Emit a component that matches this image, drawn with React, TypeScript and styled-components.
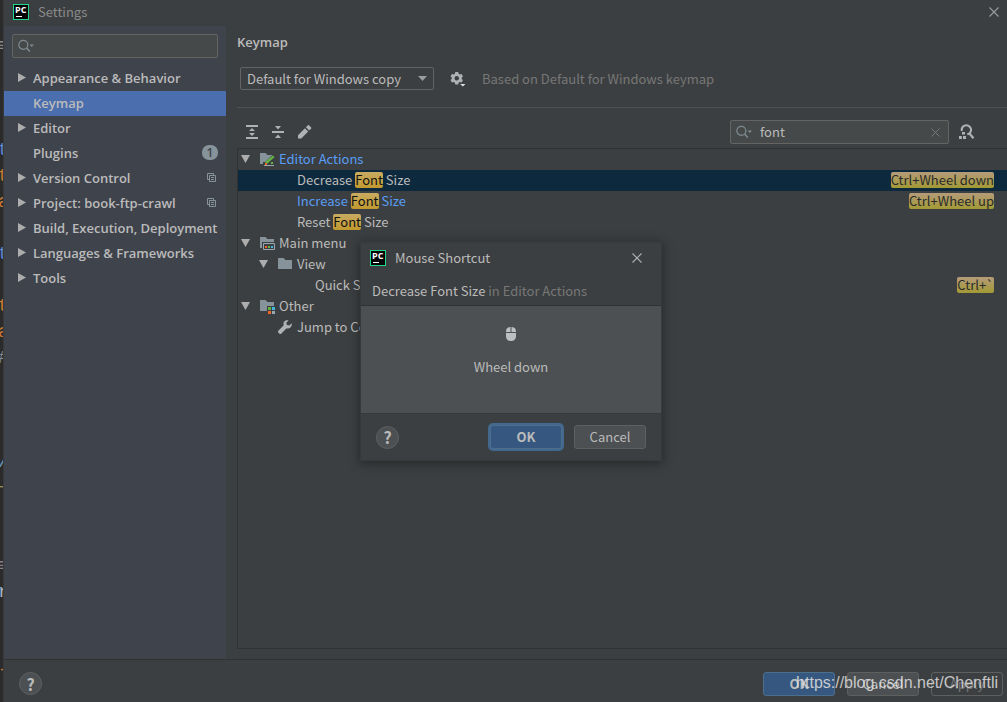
import React, { useState } from 'react';
import styled, { createGlobalStyle, css } from 'styled-components';

const colors = {
  window: '#3c3f41',
  sidebar: '#3f434c',
  editor: '#2b2b2b',
  field: '#45494a',
  fieldBorder: '#646464',
  line: '#323232',
  divider: '#515151',
  text: '#bbbbbb',
  muted: '#777777',
  link: '#589df6',
  selected: '#4b6eaf',
  rowSelected: '#0d293e',
  icon: '#afb1b3',
  folder: '#87939a',
};

const boldFont = css`
  font-family: "Open Sans", "Noto Sans", sans-serif;
  font-weight: 600;
`;

const GlobalStyle = createGlobalStyle`
  * { box-sizing: border-box; }
  body {
    margin: 0;
    background: ${colors.window};
    color: ${colors.text};
    font: 13px/20px "Noto Sans CJK SC", "Noto Sans", sans-serif;
  }
  button, input, select { font: inherit; color: inherit; }
  ul { list-style: none; margin: 0; padding: 0; }
  h1, h2, p { margin: 0; }
  svg { display: block; flex: none; }
`;

const Screen = styled.div`
  position: relative;
  display: grid;
  grid-template-columns: 4px minmax(0, 1fr);
  min-height: 100vh;
`;

const EditorStrip = styled.div`
  height: 0;
  min-height: 100%;
  overflow: hidden;
  padding-top: 33px;
  background: ${colors.editor};
  border-right: 1px solid #37393b;
  font: 18px/26px "Liberation Mono", monospace;
  text-indent: -2px;
`;

const CodeLine = styled.div<{ $color?: string }>`
  height: 26px;
  color: ${p => p.$color};
`;

const Window = styled.div`
  display: flex;
  flex-direction: column;
  min-width: 0;
`;

const TitleBar = styled.header`
  display: flex;
  align-items: center;
  gap: 9px;
  height: 26px;
  padding: 0 8px 2px 9px;
  color: #8a8a8a;
`;

const Title = styled.h1`
  flex: 1;
  font-size: 13px;
  font-weight: 400;
`;

const IconButton = styled.button`
  display: grid;
  place-items: center;
  padding: 0;
  border: 0;
  background: none;
  color: ${colors.icon};
`;

const Body = styled.div`
  display: grid;
  grid-template-columns: 222px minmax(0, 1fr);
  flex: 1;
`;

const Sidebar = styled.nav`
  background: ${colors.sidebar};
  padding-top: 8px;
`;

const SearchBox = styled.label<{ $width?: string; $margin?: string }>`
  display: flex;
  align-items: center;
  gap: 8px;
  height: 24px;
  width: ${p => p.$width || 'auto'};
  margin: ${p => p.$margin || '0'};
  padding: 0 8px 0 5px;
  background: ${colors.field};
  border: 1px solid ${colors.fieldBorder};
  border-radius: 2px;
`;

const SearchInput = styled.input`
  flex: 1;
  min-width: 0;
  padding: 0;
  border: 0;
  outline: 0;
  background: none;
`;

const NavLink = styled.a<{ $active?: boolean }>`
  display: flex;
  align-items: center;
  gap: 7px;
  height: 25px;
  padding: 0 8px 2px 14px;
  color: ${colors.text};
  ${boldFont}
  text-decoration: none;
  white-space: nowrap;
  ${p => p.$active && css`background: ${colors.selected};`}
`;

const NavLabel = styled.span`
  flex: 1;
`;

const CountBadge = styled.span`
  width: 16px;
  height: 15px;
  border-radius: 7px;
  background: #87939a;
  color: #3f434c;
  font-size: 12px;
  font-weight: 600;
  line-height: 15px;
  text-align: center;
`;

const ShareSlot = styled.span`
  padding-right: 2px;
`;

const Main = styled.main`
  display: flex;
  flex-direction: column;
  min-width: 0;
  padding: 6px 0 10px 11px;
`;

const PageTitle = styled.h2`
  font-size: 13px;
  line-height: 20px;
  ${boldFont}
`;

const SchemeRow = styled.div`
  display: flex;
  align-items: center;
  margin: 15px 0 17px 3px;
`;

const SelectBox = styled.div`
  display: flex;
  align-items: center;
  width: 194px;
  height: 23px;
  padding: 0 6px;
  border: 1px solid ${colors.fieldBorder};
  border-radius: 2px;
`;

const Select = styled.select`
  appearance: none;
  flex: 1;
  min-width: 0;
  height: 20px;
  padding: 0;
  border: 0;
  outline: 0;
  background: none;
`;

const GearButton = styled(IconButton)`
  margin: 0 16px;
`;

const Note = styled.span`
  color: ${colors.muted};
`;

const Divider = styled.hr`
  width: 100%;
  margin: 0 0 12px;
  border: 0;
  border-top: 1px solid ${colors.divider};
`;

const Toolbar = styled.div`
  display: flex;
  align-items: center;
  gap: 10px;
  padding: 0 32px 0 7px;
  margin-bottom: 4px;
`;

const Spacer = styled.span`
  flex: 1;
`;

const TreePanel = styled.div`
  flex: 1;
  border: solid ${colors.line};
  border-width: 1px 0 1px 1px;
`;

const TreeRow = styled.li<{ $depth: number; $selected?: boolean; $link?: boolean }>`
  display: flex;
  align-items: center;
  height: 21px;
  padding: 0 13px 2px ${p => 3 + p.$depth * 18}px;
  white-space: nowrap;
  color: ${p => (p.$link ? colors.link : colors.text)};
  ${p => p.$selected && css`background: ${colors.rowSelected};`}
`;

const Twisty = styled.span<{ $leaf?: boolean }>`
  width: ${p => (p.$leaf ? 20 : 18)}px;
  flex: none;
`;

const TreeIcon = styled.span`
  width: 20px;
  flex: none;
`;

const TreeLabel = styled.span`
  flex: 1;
`;

const Match = styled.mark`
  border-radius: 2px;
  background: linear-gradient(#c8ab62, #c1992f);
  color: #111;
  line-height: 16px;
  display: inline-block;
`;

const Shortcut = styled.kbd`
  border-radius: 2px;
  background: linear-gradient(#b59b7a, #a29a34);
  color: #2b2b2b;
  font: inherit;
  line-height: 16px;
`;

const Footer = styled.footer`
  display: flex;
  align-items: center;
  gap: 12px;
  height: 43px;
  padding: 5px 4px 0 15px;
  border-top: 1px solid ${colors.line};
`;

const HelpButton = styled.button`
  width: 23px;
  height: 23px;
  padding: 0;
  border: 1px solid #5e6162;
  border-radius: 50%;
  background: #4c5052;
  font-size: 16px;
  font-weight: 700;
  line-height: 20px;
  text-align: center;
`;

const Button = styled.button<{ $primary?: boolean; $focused?: boolean }>`
  width: 72px;
  height: 24px;
  padding: 0;
  border: 1px solid #5e6060;
  border-radius: 3px;
  background: #4c5052;
  line-height: 20px;
  ${p => p.$primary && css`
    background: #365880;
    border-color: #4c708c;
    font-weight: 700;
  `}
  ${p => p.$focused && css`box-shadow: 0 0 0 2px #43688f;`}
  &:disabled {
    background: none;
    color: ${colors.muted};
  }
`;

const Watermark = styled.div`
  position: absolute;
  right: 9px;
  bottom: 9px;
  color: rgba(225, 225, 225, 0.85);
  font: 16px/20px "Liberation Sans", sans-serif;
  pointer-events: none;
`;

const Dialog = styled.section`
  position: absolute;
  top: 242px;
  left: 361px;
  width: 300px;
  border-top: 1px solid #37393b;
  background: ${colors.window};
  box-shadow: 0 0 0 1px #37393b, 0 2px 10px 2px rgba(0, 0, 0, 0.35);
`;

const DialogTitle = styled.header`
  display: flex;
  align-items: center;
  gap: 9px;
  height: 29px;
  padding: 0 19px 0 9px;
`;

const DialogSubject = styled.p`
  padding: 9px 11px 4px;
  border-bottom: 1px solid ${colors.line};
`;

const DialogBody = styled.div`
  display: flex;
  flex-direction: column;
  align-items: center;
  gap: 16px;
  height: 107px;
  padding-top: 21px;
  background: #4c5052;
`;

const DialogFooter = styled.div`
  display: flex;
  align-items: center;
  gap: 12px;
  height: 47px;
  padding: 0 15px;
  border-top: 1px solid #37393b;
`;

const LogoText = styled.text`
  font: 700 9px "Open Sans", sans-serif;
  fill: #ffffff;
`;

const Logo = () => (
  <svg width="16" height="16" viewBox="0 0 16 16" aria-hidden="true">
    <rect x="0.5" y="0.5" width="15" height="15" fill="#050505" stroke="#21d789" />
    <LogoText x="2" y="9">PC</LogoText>
    <rect x="3" y="12" width="6" height="1" fill="#fff" />
  </svg>
);

const Cross = ({ size = 10, color = '#9a9c9d' }) => (
  <svg width={size} height={size} viewBox="0 0 10 10" aria-hidden="true">
    <path d="M.5.5l9 9M9.5.5l-9 9" stroke={color} strokeWidth="1.1" fill="none" />
  </svg>
);

const SearchIcon = () => (
  <svg width="16" height="14" viewBox="0 0 16 14" fill="none" aria-hidden="true">
    <circle cx="5.3" cy="5.8" r="4.5" stroke="#7f8b91" strokeWidth="1.2" />
    <path d="M8.6 9.1l3.2 3.4" stroke="#7f8b91" strokeWidth="1.5" />
    <path d="M11.5 5.5H16L13.75 8z" fill="#7f8b91" />
  </svg>
);

const RightArrow = () => (
  <svg width="8" height="9" viewBox="0 0 8 9" aria-hidden="true">
    <path d="M0 0l8 4.5L0 9z" fill="#adadad" />
  </svg>
);

const DownArrow = () => (
  <svg width="9" height="8" viewBox="0 0 9 8" aria-hidden="true">
    <path d="M0 0h9L4.5 8z" fill="#adadad" />
  </svg>
);

const ComboArrow = () => (
  <svg width="9" height="5" viewBox="0 0 9 5" aria-hidden="true">
    <path d="M0 0h9L4.5 5z" fill="#9a9da0" />
  </svg>
);

const ShareIcon = () => (
  <svg width="9" height="9" viewBox="0 0 9 9" fill="none" stroke="#87939a" aria-hidden="true">
    <path d="M2 6.5H.5v-6h6V2M2.5 2.5h6v6h-6zM4 4.5h3M4 6.5h3" />
  </svg>
);

const GearIcon = () => (
  <svg width="16" height="16" viewBox="0 0 16 16" aria-hidden="true">
    <path
      fillRule="evenodd"
      fill={colors.icon}
      d="M5.3 1h2.9l.4 1.8 1.2.7 1.8-.6 1.4 2.5L11.7 6.6v1.3l1.3 1.2-1.4 2.4-1.8-.5-1.2.7-.4 1.8H5.3l-.4-1.8-1.2-.7-1.8.5L.5 9.1l1.3-1.2V6.6L.5 5.4l1.4-2.5 1.8.6 1.2-.7zM6.75 5a2.25 2.25 0 100 4.5 2.25 2.25 0 000-4.5z"
    />
    <path d="M9.5 12.5H16L12.75 16z" fill={colors.window} />
    <path d="M10.2 13H15.5L12.85 15.6z" fill="#e0e0e0" />
  </svg>
);

const ExpandIcon = () => (
  <svg width="16" height="16" viewBox="0 0 16 16" fill={colors.icon} aria-hidden="true">
    <path d="M2 1h12v2H2zM2 13h12v2H2zM8 4l3 3H5zM8 12L5 9h6z" />
  </svg>
);

const CollapseIcon = () => (
  <svg width="16" height="16" viewBox="0 0 16 16" fill={colors.icon} aria-hidden="true">
    <path d="M2 7h12v2H2zM5 2h6L8 5.5zM5 14h6l-3-3.5z" />
  </svg>
);

const PencilIcon = () => (
  <svg width="16" height="16" viewBox="0 0 16 16" fill={colors.icon} aria-hidden="true">
    <path d="M2 11.200V14.500H5.300L12.200 7.600 8.900 4.300zM9.900 3.300L11.900 1.300a.8.8 0 011.100 0L15.200 3.500a.8.8 0 010 1.100L13.200 6.600z" />
  </svg>
);

const FindShortcutIcon = () => (
  <svg width="16" height="16" viewBox="0 0 16 16" aria-hidden="true">
    <path d="M2.9 7A4.6 4.6 0 1110.5 9.3L8.3 10.3" fill="none" stroke={colors.icon} strokeWidth="2" />
    <path d="M10 9l4.5 5.2" stroke={colors.icon} strokeWidth="2.2" />
    <path d="M3 8h3v2.5H3zM0 12h2.8v3H0zM4 12h3v3H4z" fill={colors.icon} />
  </svg>
);

const FolderIcon = ({ kind }: { kind: string }) => (
  <svg width="16" height="16" viewBox="0 0 16 16" aria-hidden="true">
    <path d="M1 2h5.5l2 2H15v9H1z" fill={colors.folder} />
    {kind === 'editor' && (
      <>
        <path d="M4 11h2l7.5-7H16v12H4z" fill={colors.window} />
        <path d="M6.5 12.5V10.5L14 4.5l1.5 1.5-7 6.5z" fill="#62b543" />
        <path d="M5 14h10v1H5z" fill="#9aa7b0" />
        <path d="M6 12h2v2H6z" fill="#f26522" />
        <path d="M12 11h2v2h-2z" fill="#62b543" />
      </>
    )}
    {kind === 'menu' && (
      <>
        <path d="M3 7h13v9H3z" fill={colors.window} />
        <path d="M4.5 8.5h11v6h-11z" fill="none" stroke="#9aa7b0" />
        <path d="M6 11h2v2H6z" fill="#f26522" />
        <path d="M9 11h2v2H9z" fill="#62b543" />
        <path d="M12 11h2v2h-2z" fill="#40b6e0" />
      </>
    )}
    {kind === 'other' && (
      <>
        <path d="M8 8h8v8H8z" fill={colors.window} />
        <path d="M9 9h3v3H9z" fill="#62b543" />
        <path d="M13 9h3v3h-3z" fill="#40b6e0" />
        <path d="M9 13h3v3H9z" fill="#f26522" />
        <path d="M13 13h3v3h-3z" fill="#9aa7b0" />
      </>
    )}
  </svg>
);

const WrenchIcon = () => (
  <svg width="16" height="16" viewBox="0 0 16 16" aria-hidden="true">
    <path
      fill={colors.icon}
      d="M14.7 4.3L12.2 6.6 9.9 6 9.3 3.8 11.6 1.4C9.8.8 7.8 1.4 6.9 3 6.3 4.1 6.4 5.3 6.8 6.3L1.5 11.5a1.5 1.5 0 000 2.3l.7.7a1.5 1.5 0 002.2 0L9.6 9.2c1.2.5 2.7.3 3.8-.7 1.2-1.1 1.7-2.8 1.3-4.2z"
    />
  </svg>
);

const MouseIcon = () => (
  <svg width="10" height="14" viewBox="0 0 10 14" fill="#bcbec0" aria-hidden="true">
    <path d="M0 5V4.5A4.5 4.5 0 014 .1V5zM6 .1A4.5 4.5 0 0110 4.5V5H6zM4.5 0h1v5h-1zM0 6h10v3.5a4.5 4.5 0 01-4.5 4.5h-1A4.5 4.5 0 010 9.5z" />
  </svg>
);

const code: [string, string?][] = [
  ['≡', '#8c8c8c'], [''], [''], [''], ['t', '#5c86d6'], ['t', '#cc7832'], ['a', '#cc7832'], [''],
  ['t', '#5c86d6'], [''], ['t', '#cc7832'], ['a', '#cc7832'], ['#', '#808a94'], [''], [''], [''],
  ['/', '#6897bb'], ['~', '#9a8f55'], [''], [''], ['≡', '#8c7f8c'], ['r', '#a9b7c6'], [''], [''], ['-', '#cc7832'],
];

const sections = [
  { label: 'Appearance & Behavior', expandable: true },
  { label: 'Keymap', active: true },
  { label: 'Editor', expandable: true },
  { label: 'Plugins', count: 1 },
  { label: 'Version Control', expandable: true, shared: true },
  { label: 'Project: book-ftp-crawl', expandable: true, shared: true },
  { label: 'Build, Execution, Deployment', expandable: true },
  { label: 'Languages & Frameworks', expandable: true },
  { label: 'Tools', expandable: true },
];

type Action = {
  label: string;
  depth: number;
  icon?: string;
  link?: boolean;
  selected?: boolean;
  shortcut?: string;
};

const actions: Action[] = [
  { label: 'Editor Actions', depth: 0, icon: 'editor', link: true },
  { label: 'Decrease Font Size', depth: 2, selected: true, shortcut: 'Ctrl+Wheel down' },
  { label: 'Increase Font Size', depth: 2, link: true, shortcut: 'Ctrl+Wheel up' },
  { label: 'Reset Font Size', depth: 2 },
  { label: 'Main menu', depth: 0, icon: 'menu' },
  { label: 'View', depth: 1, icon: 'plain' },
  { label: 'Quick Switch Scheme...', depth: 3, shortcut: 'Ctrl+`' },
  { label: 'Other', depth: 0, icon: 'other' },
  { label: 'Jump to Colors and Fonts', depth: 1, icon: 'wrench' },
];

const Highlighted = ({ text }: { text: string }) => {
  const parts = text.split(' Font ');
  return parts.length === 2 ? <>{parts[0]} <Match>Font</Match> {parts[1]}</> : <>{text}</>;
};

const ActionRow = ({ label, depth, icon, link, selected, shortcut }: Action) => (
  <TreeRow $depth={depth} $link={link} $selected={selected}>
    <Twisty $leaf={!icon}>{icon && icon !== 'wrench' && <DownArrow />}</Twisty>
    {icon ? (
      <TreeIcon>{icon === 'wrench' ? <WrenchIcon /> : <FolderIcon kind={icon} />}</TreeIcon>
    ) : null}
    <TreeLabel><Highlighted text={label} /></TreeLabel>
    {shortcut && <Shortcut>{shortcut}</Shortcut>}
  </TreeRow>
);

export default function App() {
  const [filter, setFilter] = useState('');
  const [query, setQuery] = useState('font');

  return (
    <>
      <GlobalStyle />
      <Screen>
        <EditorStrip aria-hidden="true">
          {code.map(([text, color], i) => <CodeLine key={i} $color={color}>{text}</CodeLine>)}
        </EditorStrip>
        <Window>
          <TitleBar>
            <Logo />
            <Title>Settings</Title>
            <IconButton aria-label="Close settings"><Cross /></IconButton>
          </TitleBar>
          <Body>
            <Sidebar aria-label="Settings sections">
              <SearchBox $margin="0 8px 8px">
                <SearchIcon />
                <SearchInput aria-label="Search settings" value={filter} onChange={e => setFilter(e.target.value)} />
              </SearchBox>
              <ul>
                {sections.map(s => (
                  <li key={s.label}>
                    <NavLink href="#" $active={s.active}>
                      {s.expandable ? <RightArrow /> : <svg width="8" height="9" aria-hidden="true" />}
                      <NavLabel>{s.label}</NavLabel>
                      {s.count && <CountBadge>{s.count}</CountBadge>}
                      {s.shared && <ShareSlot><ShareIcon /></ShareSlot>}
                    </NavLink>
                  </li>
                ))}
              </ul>
            </Sidebar>
            <Main>
              <PageTitle>Keymap</PageTitle>
              <SchemeRow>
                <SelectBox>
                  <Select aria-label="Keymap scheme">
                    <option>Default for Windows copy</option>
                  </Select>
                  <ComboArrow />
                </SelectBox>
                <GearButton aria-label="Scheme actions"><GearIcon /></GearButton>
                <Note>Based on Default for Windows keymap</Note>
              </SchemeRow>
              <Divider />
              <Toolbar>
                <IconButton aria-label="Expand all"><ExpandIcon /></IconButton>
                <IconButton aria-label="Collapse all"><CollapseIcon /></IconButton>
                <IconButton aria-label="Edit shortcut"><PencilIcon /></IconButton>
                <Spacer />
                <SearchBox $width="219px">
                  <SearchIcon />
                  <SearchInput aria-label="Search actions" value={query} onChange={e => setQuery(e.target.value)} />
                  <IconButton aria-label="Clear search" onClick={() => setQuery('')}><Cross size={9} color="#777b7d" /></IconButton>
                </SearchBox>
                <IconButton aria-label="Find actions by shortcut"><FindShortcutIcon /></IconButton>
              </Toolbar>
              <TreePanel>
                <ul>{actions.map(a => <ActionRow key={a.label} {...a} />)}</ul>
              </TreePanel>
            </Main>
          </Body>
          <Footer>
            <HelpButton aria-label="Help">?</HelpButton>
            <Spacer />
            <Button $primary>OK</Button>
            <Button>Cancel</Button>
            <Button disabled>Apply</Button>
          </Footer>
        </Window>
        <Dialog role="dialog" aria-label="Mouse Shortcut">
          <DialogTitle>
            <Logo />
            <Title as="h2">Mouse Shortcut</Title>
            <IconButton aria-label="Close dialog"><Cross color="#afb1b3" /></IconButton>
          </DialogTitle>
          <DialogSubject>Decrease Font Size <Note>in Editor Actions</Note></DialogSubject>
          <DialogBody>
            <MouseIcon />
            <p>Wheel down</p>
          </DialogBody>
          <DialogFooter>
            <HelpButton aria-label="Shortcut help">?</HelpButton>
            <Spacer />
            <Button $primary $focused>OK</Button>
            <Button>Cancel</Button>
          </DialogFooter>
        </Dialog>
        <Watermark>https://blog.csdn.net/Chenftli</Watermark>
      </Screen>
    </>
  );
}
